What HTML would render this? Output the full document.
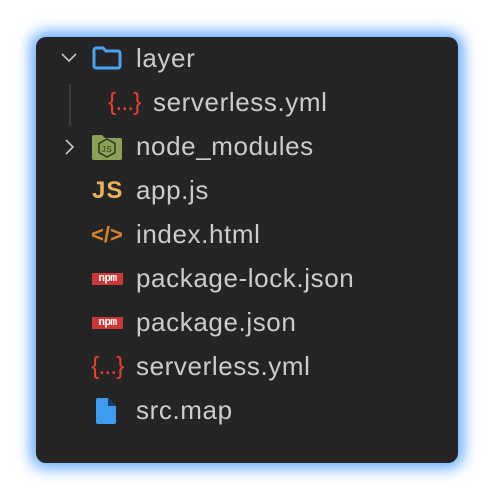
<!DOCTYPE html>
<html><head><style>
html,body{margin:0;padding:0;background:#fff;width:494px;height:500px;overflow:hidden}
.panel{position:absolute;left:36px;top:37px;width:422px;height:426px;background:#252526;border-radius:10px;box-shadow:0 0 14px 6px rgba(60,150,255,.75)}
.row{position:absolute;left:0;height:44px;width:100%;font-family:"Liberation Sans",sans-serif;font-size:26px;letter-spacing:0.6px;color:#cccccc;line-height:44px}
.row span.t{position:absolute;left:100px;top:-1px}
.ic{position:absolute}
.npm{position:absolute;left:56px;top:16px;width:31px;height:12px;background:#cb3837;color:#fff;font:bold 11px/12px "Liberation Mono",monospace;text-align:center;letter-spacing:-0.5px}
.br{position:absolute;font-family:"Liberation Sans",sans-serif;color:#e8412c;font-size:25px;letter-spacing:-1px;top:-1px}
</style></head><body>
<div class="panel">
 <div class="row" style="top:0">
  <svg class="ic" style="left:24px;top:15px" width="18" height="12"><path d="M2 2l7 7 7-7" stroke="#c5c5c5" stroke-width="1.6" fill="none"/></svg>
  <svg class="ic" style="left:56px;top:9px" width="30" height="24"><path d="M2 4a2 2 0 012-2h7l3 3h12a2 2 0 012 2v13a2 2 0 01-2 2H4a2 2 0 01-2-2z" fill="none" stroke="#4aa3f2" stroke-width="3"/></svg>
  <span class="t">layer</span></div>
 <div style="position:absolute;left:33px;top:47px;width:2px;height:42px;background:#3c3c3c"></div>
 <div class="row" style="top:44px">
  <span class="br" style="left:72px">{...}</span>
  <span class="t" style="left:117px">serverless.yml</span></div>
 <div class="row" style="top:88px">
  <svg class="ic" style="left:28px;top:13px" width="12" height="18"><path d="M2 2l7 7-7 7" stroke="#c5c5c5" stroke-width="1.6" fill="none"/></svg>
  <svg class="ic" style="left:56px;top:9px" width="30" height="26"><path d="M0 3a2 2 0 012-2h8l3 3h15a2 2 0 012 2v18a2 2 0 01-2 2H2a2 2 0 01-2-2z" fill="#8ba157"/><path d="M15 5l8 4.5v9L15 23l-8-4.5v-9z" fill="none" stroke="#2d3a1a" stroke-width="1.5"/><text x="15" y="18" font-family="Liberation Sans" font-size="8" fill="#2d3a1a" text-anchor="middle">JS</text></svg>
  <span class="t">node_modules</span></div>
 <div class="row" style="top:132px">
  <span style="position:absolute;left:56px;font:bold 24px/44px 'Liberation Sans',sans-serif;color:#e8b35c;letter-spacing:1px">JS</span>
  <span class="t">app.js</span></div>
 <div class="row" style="top:176px">
  <span style="position:absolute;left:55px;font:bold 22px/44px 'Liberation Sans',sans-serif;color:#d9822b;letter-spacing:0">&lt;/&gt;</span>
  <span class="t">index.html</span></div>
 <div class="row" style="top:220px"><div class="npm">npm</div><span class="t">package-lock.json</span></div>
 <div class="row" style="top:264px"><div class="npm">npm</div><span class="t">package.json</span></div>
 <div class="row" style="top:308px"><span class="br" style="left:55px">{...}</span><span class="t">serverless.yml</span></div>
 <div class="row" style="top:352px">
  <svg class="ic" style="left:60px;top:9px" width="20" height="26"><path d="M2 0h10l8 8v16a2 2 0 01-2 2H2a2 2 0 01-2-2V2a2 2 0 012-2z" fill="#3d9cf0"/><path d="M12 0v8h8z" fill="#1b3f66"/></svg>
  <span class="t">src.map</span></div>
</div>
</body></html>
